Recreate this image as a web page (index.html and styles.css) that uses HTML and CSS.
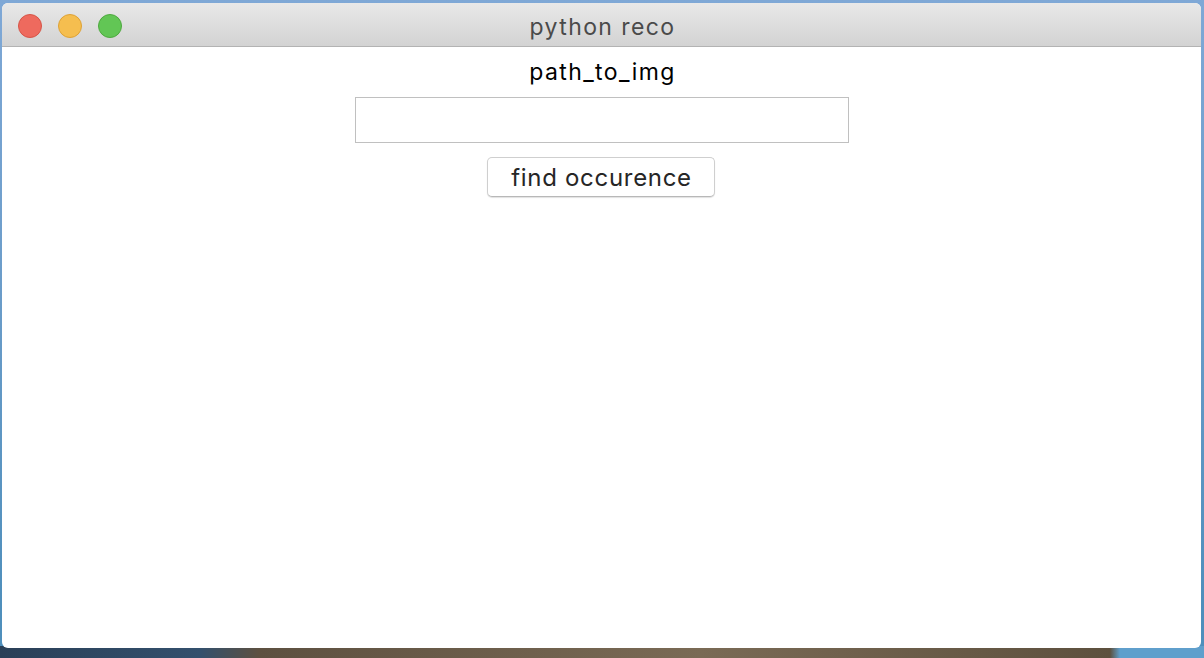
FILE: index.html
```html
<!DOCTYPE html>
<html>
<head>
<meta charset="utf-8">
<link rel="stylesheet" href="styles.css">
</head>
<body>
<div class="desktop">
  <div class="window">
    <div class="titlebar">
      <div class="lights">
        <span class="light red"></span>
        <span class="light yellow"></span>
        <span class="light green"></span>
      </div>
      <div class="title">python reco</div>
    </div>
    <div class="content">
      <div class="label">path_to_img</div>
      <input class="field" type="text">
      <button class="btn">find occurence</button>
    </div>
  </div>
</div>
</body>
</html>
```
FILE: styles.css
```css
html, body {
  margin: 0;
  padding: 0;
  width: 1204px;
  height: 658px;
  overflow: hidden;
}
.desktop {
  width: 1204px;
  height: 658px;
  box-sizing: border-box;
  padding: 3px 2px 10px 2px;
  background:
    linear-gradient(to right, #2a3f57 0px, #33506d 200px, #5d5040 260px, #7a6a55 700px, #5d503e 1110px, #5f9fcc 1120px, #5f9fcc 1204px) bottom / 100% 12px no-repeat,
    linear-gradient(to bottom, #7fa8d6 0px, #6a9cc9 300px, #4f8fbc 600px);
}
.window {
  width: 1199px;
  height: 645px;
  background: #ffffff;
  border-radius: 6px;
  overflow: hidden;
  display: flex;
  flex-direction: column;
}
.titlebar {
  height: 43px;
  flex: none;
  background: linear-gradient(to bottom, #e8e8e8, #d3d3d3);
  border-bottom: 1px solid #b3b3b3;
  display: flex;
  align-items: center;
  justify-content: center;
  position: relative;
}
.lights {
  position: absolute;
  left: 16px;
  top: 11px;
  display: flex;
  gap: 16px;
}
.light {
  width: 24px;
  height: 24px;
  border-radius: 50%;
  box-sizing: border-box;
}
.red { background: #ee6a5e; border: 1px solid #d65548; }
.yellow { background: #f5be4f; border: 1px solid #dea236; }
.green { background: #62c655; border: 1px solid #4ea93f; }
.title {
  font-family: Inter, "Liberation Sans", sans-serif;
  font-size: 23px;
  letter-spacing: 1.4px;
  color: #4a4a4a;
  padding-top: 5px;
  margin-left: 2px;
}
.content {
  display: flex;
  flex-direction: column;
  align-items: center;
  padding-top: 10px;
}
.label {
  font-family: Inter, "Liberation Sans", sans-serif;
  font-size: 23px;
  letter-spacing: 1.4px;
  color: #000;
  height: 30px;
  line-height: 30px;
  margin-left: 2px;
}
.field {
  margin-top: 10px;
  width: 494px;
  height: 46px;
  box-sizing: border-box;
  border: 1px solid #c0c0c0;
  background: #fff;
  outline: none;
  padding: 0;
}
.btn {
  margin-top: 14px;
  width: 228px;
  height: 40px;
  box-sizing: border-box;
  border: 1px solid #cfcfcf;
  border-bottom-color: #b8b8b8;
  border-radius: 5px;
  background: #fff;
  box-shadow: 0 1px 1px rgba(0,0,0,0.12);
  font-family: Inter, "Liberation Sans", sans-serif;
  font-size: 24px;
  letter-spacing: 0.7px;
  color: #262626;
  padding: 0 0 0 1px;
  margin-left: -1px;
}
```
